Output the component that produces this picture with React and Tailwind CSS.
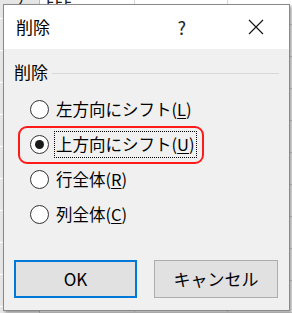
import React from 'react';

const font = { fontFamily: '"Noto Sans CJK JP", "Noto Sans", sans-serif' };

const options = [
  { label: '左方向にシフト', key: 'L' },
  { label: '上方向にシフト', key: 'U', checked: true },
  { label: '行全体', key: 'R' },
  { label: '列全体', key: 'C' },
];

function Radio({ checked }) {
  return (
    <span className="w-[19px] h-[19px] rounded-full border border-[#333] bg-white flex items-center justify-center shrink-0">
      {checked && <span className="w-[9px] h-[9px] rounded-full bg-[#1a1a1a]" />}
    </span>
  );
}

export default function App() {
  const rows = [0, 1, 2, 3, 4, 5, 6, 7, 8, 9, 10];
  return (
    <div className="relative w-[292px] h-[313px] overflow-hidden bg-white" style={font}>
      {/* spreadsheet behind */}
      <div className="flex flex-col -mt-[7px]">
        {rows.map((r) => (
          <div key={r} className="flex h-[32px] border-b border-[#d6d6d6] shrink-0">
            <div className="w-[40px] bg-[#e6e6e6] border-r border-[#bdbdbd] text-[15px] text-[#222] flex items-center justify-center -translate-y-[6px]">
              {r === 0 ? '2' : ''}
            </div>
            <div className="w-[95px] border-r border-[#d6d6d6] text-[15px] text-[#222] pl-[6px] flex items-center -translate-y-[6px]">
              {r === 0 ? 'EEE' : ''}
            </div>
            <div className="w-[93px] border-r border-[#d6d6d6]" />
            <div className="flex-1" />
          </div>
        ))}
      </div>

      {/* dialog */}
      <div className="absolute left-[3px] top-[4px] w-[287px] h-[307px] border border-[#8a8a8a] bg-[#f0f0f0] flex flex-col shadow-[2px_2px_3px_rgba(0,0,0,0.35)]">
        <div className="h-[44px] bg-white flex items-center pl-[12px] shrink-0">
          <span className="text-[17px] text-black">削除</span>
          <span className="ml-auto text-[18px] text-[#222] mr-[62px]">?</span>
          <svg width="16" height="16" viewBox="0 0 16 16" className="mr-[25px]">
            <path d="M1 1 L15 15 M15 1 L1 15" stroke="#111" strokeWidth="1.1" />
          </svg>
        </div>

        <div className="flex flex-col pl-[10px] pr-[10px] pt-[10px]">
          <div className="flex items-center gap-[4px] h-[26px]">
            <span className="text-[17px] text-black">削除</span>
            <span className="flex-1 h-px bg-[#d7d7d7] mt-[2px]" />
          </div>

          <div className="flex flex-col mt-[7px] pl-[16px]">
            {options.map((o) => (
              <div key={o.key} className="flex items-center h-[35px] gap-[5px] relative">
                <Radio checked={o.checked} />
                <span
                  className={`text-[16.5px] text-black leading-none px-[1px] py-[4px] border ${
                    o.checked ? 'border-dotted border-black' : 'border-transparent'
                  }`}
                >
                  {o.label}(<span className="underline underline-offset-2">{o.key}</span>)
                </span>
                {o.checked && (
                  <span className="absolute -left-[12px] top-[-1px] w-[186px] h-[38px] border-2 border-[#ff1a1a] rounded-[9px]" />
                )}
              </div>
            ))}
          </div>

          <div className="flex justify-between mt-[28px] pr-[1px]">
            <button className="w-[123px] h-[38px] bg-[#e1e1e1] border-2 border-[#0078d7] text-[17px] text-black">
              OK
            </button>
            <button className="w-[124px] h-[38px] bg-[#e1e1e1] border border-[#adadad] text-[17px] text-black">
              キャンセル
            </button>
          </div>
        </div>
      </div>
    </div>
  );
}
